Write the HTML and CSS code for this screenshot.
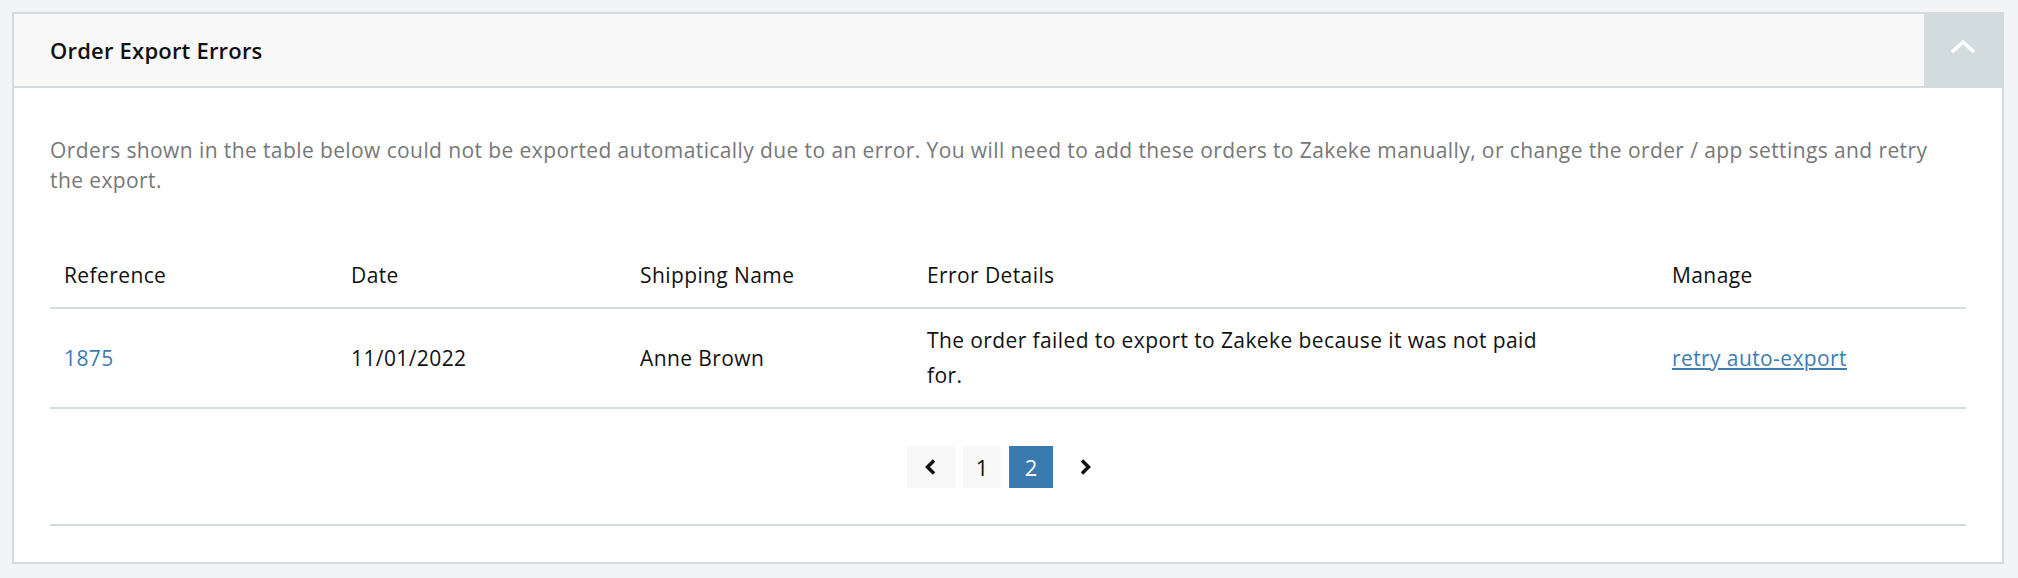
FILE: index.html
```html
<!DOCTYPE html>
<html lang="en">
<head>
  <meta charset="UTF-8">
  <meta name="viewport" content="width=device-width, initial-scale=1.0">
  <title>Order Export Errors</title>
  <link rel="stylesheet" href="styles.css">
</head>
<body>
  <div class="panel">
    <div class="panel-head">
      <h3>Order Export Errors</h3>
      <button class="toggle" aria-label="Collapse">
        <svg width="26" height="16" viewBox="0 0 26 16"><polyline points="2,13 13,3 24,13" fill="none" stroke="#fff" stroke-width="3.5"/></svg>
      </button>
    </div>

    <div class="panel-body">
      <p class="intro">Orders shown in the table below could not be exported automatically due to an error. You will need to add these orders to Zakeke manually, or change the order / app settings and retry the export.</p>

      <table class="errors">
        <colgroup>
          <col class="col-ref">
          <col class="col-date">
          <col class="col-name">
          <col class="col-err">
          <col>
        </colgroup>
        <thead>
          <tr>
            <th>Reference</th>
            <th>Date</th>
            <th>Shipping Name</th>
            <th>Error Details</th>
            <th>Manage</th>
          </tr>
        </thead>
        <tbody>
          <tr>
            <td><a href="#" class="ref">1875</a></td>
            <td>11/01/2022</td>
            <td>Anne Brown</td>
            <td><div class="err-text">The order failed to export to Zakeke because it was not paid for.</div></td>
            <td><a href="#" class="retry">retry auto-export</a></td>
          </tr>
        </tbody>
      </table>

      <div class="pager">
        <a href="#" class="page prev">
          <svg width="14" height="18" viewBox="0 0 14 18"><polyline points="10,2.5 3.5,9 10,15.5" fill="none" stroke="#111" stroke-width="3.5"/></svg>
        </a>
        <a href="#" class="page num">1</a>
        <a href="#" class="page num active">2</a>
        <a href="#" class="page next">
          <svg width="14" height="18" viewBox="0 0 14 18"><polyline points="4,2.5 10.5,9 4,15.5" fill="none" stroke="#111" stroke-width="3.5"/></svg>
        </a>
      </div>
    </div>
  </div>
</body>
</html>
```

FILE: styles.css
```css
body {
  margin: 0;
  padding: 12px 14px 14px 12px;
  background: #f3f4f6;
  font-family: "Open Sans", "Liberation Sans", sans-serif;
  color: #111;
}
.panel {
  background: #fff;
  border: 2px solid #d2dbde;
}
.panel-head {
  display: flex;
  align-items: stretch;
  height: 72px;
  background: #f8f8f8;
  border-bottom: 2px solid #d2dbde;
}
.panel-head h3 {
  flex: 1;
  margin: 0;
  padding-left: 36px;
  display: flex;
  align-items: center;
  font-size: 22px;
  font-weight: 600;
  letter-spacing: 0.2px;
  color: #111;
}
.toggle {
  width: 78px;
  border: none;
  background: #d2dbde;
  display: flex;
  align-items: center;
  justify-content: center;
  padding: 0 0 6px;
  cursor: pointer;
}
.panel-body {
  padding: 47px 36px 36px;
}
.intro {
  margin: 0 0 49px;
  font-size: 21px;
  letter-spacing: 0.4px;
  line-height: 30px;
  color: #777;
}
.errors {
  width: 100%;
  border-collapse: collapse;
  table-layout: fixed;
  font-size: 21px;
  letter-spacing: 0.4px;
  line-height: 35px;
}
.errors th,
.errors td {
  text-align: left;
  padding: 14px;
  vertical-align: middle;
  border-bottom: 2px solid #d2dbde;
}
.errors th {
  font-weight: 400;
}
.col-ref { width: 287px; }
.col-date { width: 289px; }
.col-name { width: 287px; }
.col-err { width: 745px; }
.err-text {
  max-width: 630px;
}
.ref {
  color: #3d7db3;
  text-decoration: none;
}
.retry {
  color: #3d7db3;
}
.pager {
  display: flex;
  justify-content: center;
  gap: 8px;
  padding: 37px 0 36px;
  border-bottom: 2px solid #d2dbde;
}
.page {
  height: 42px;
  display: flex;
  align-items: center;
  justify-content: center;
  font-size: 22px;
  color: #111;
  text-decoration: none;
  background: #f8f8f8;
}
.prev, .next { width: 48px; }
.next { background: none; }
.num { width: 38px; }
.active {
  width: 44px;
  background: #3a7aae;
  color: #fff;
}
```
